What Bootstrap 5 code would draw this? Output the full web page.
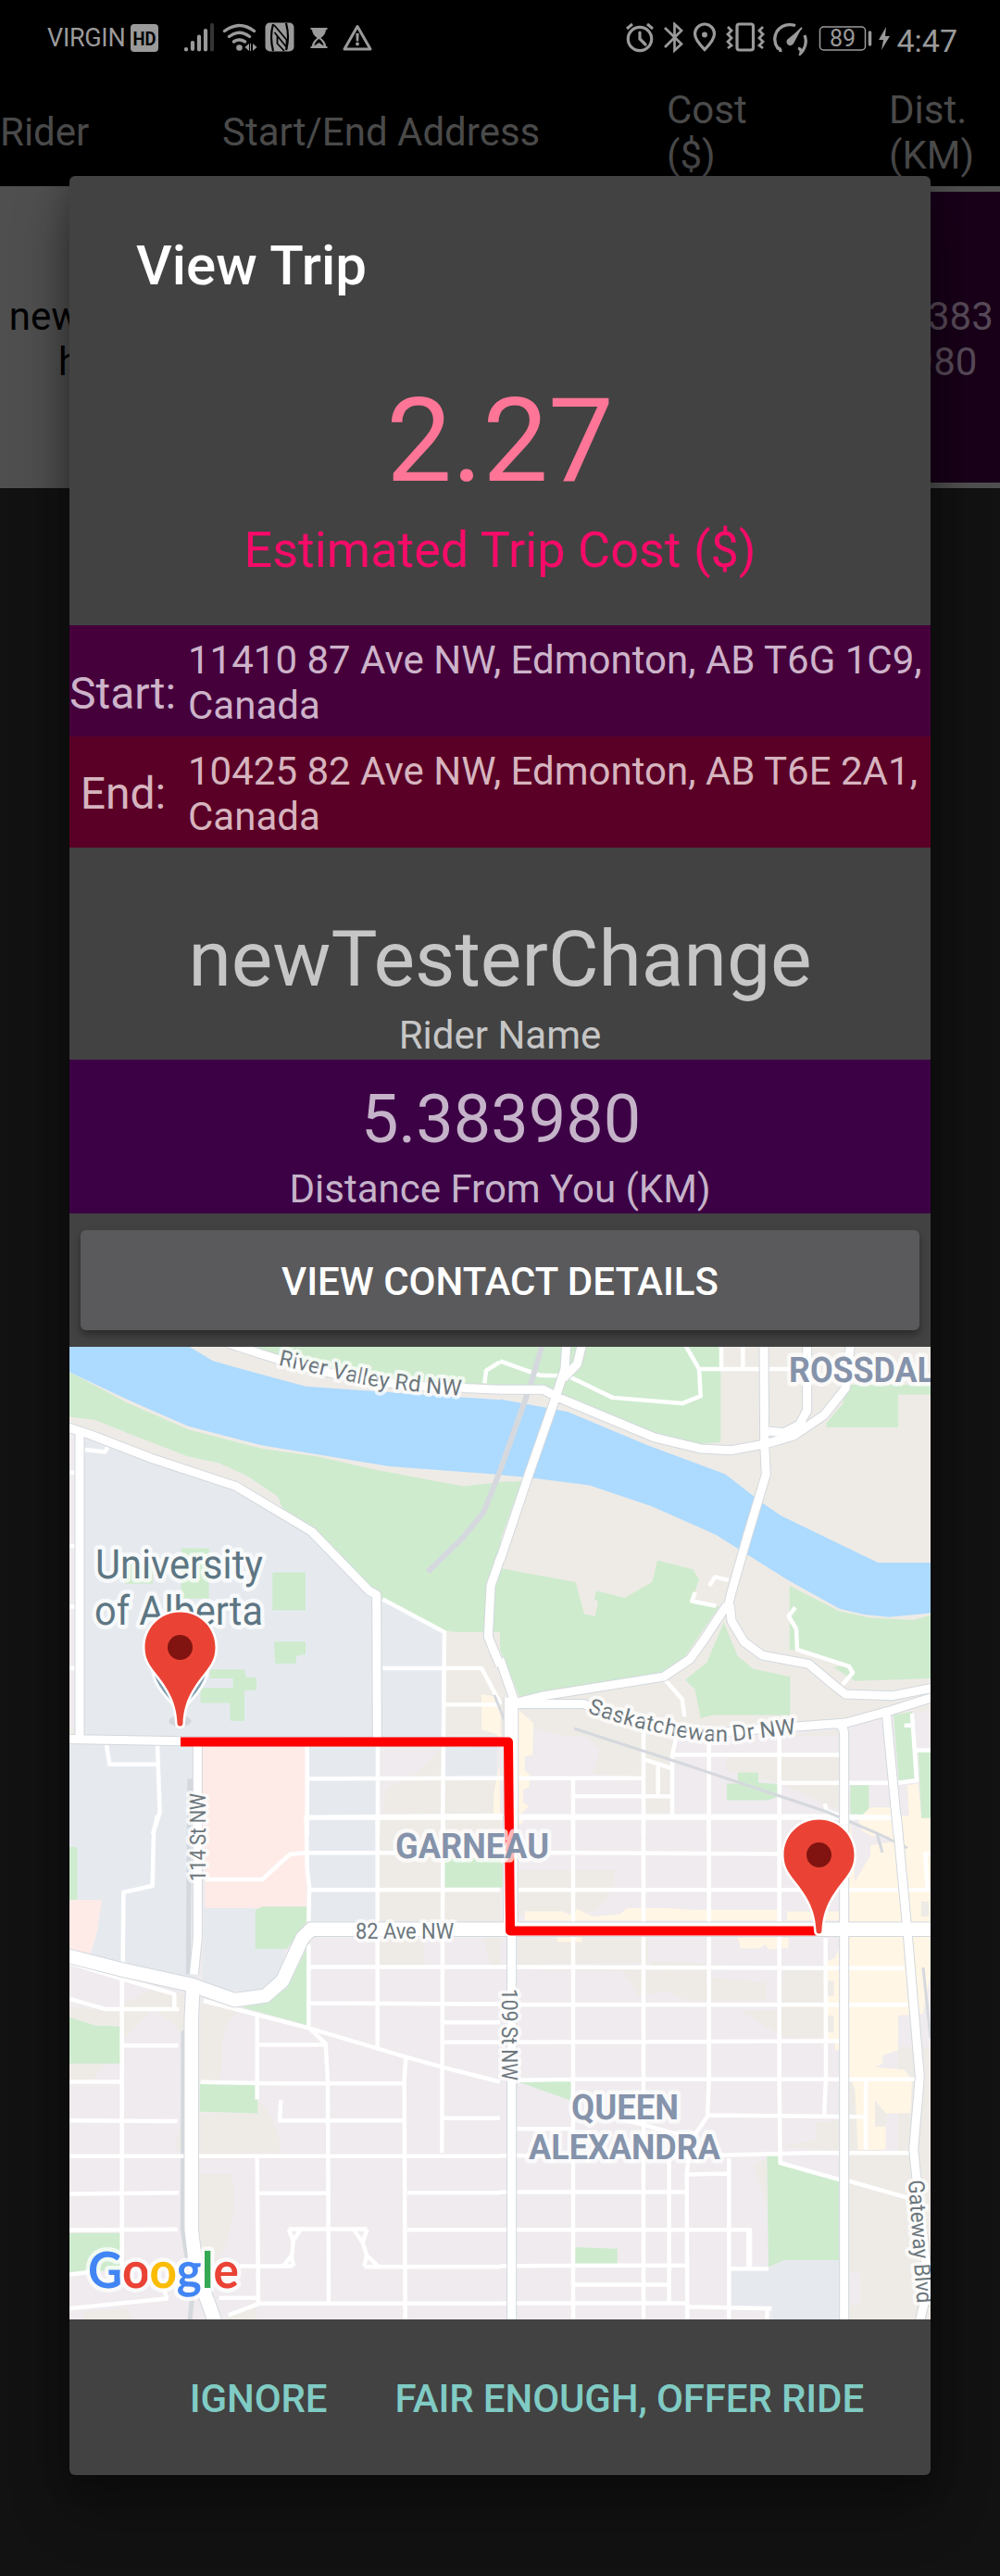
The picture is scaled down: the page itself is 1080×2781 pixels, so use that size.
<!DOCTYPE html>
<html lang="en">
<head>
<meta charset="utf-8">
<meta name="viewport" content="width=device-width, initial-scale=1">
<title>View Trip</title>
<link href="https://cdn.jsdelivr.net/npm/bootstrap@5.3.0/dist/css/bootstrap.min.css" rel="stylesheet">
<style>
  html, body { background: #121212; }
  body { font-family: Roboto, "Liberation Sans", sans-serif; font-size: 42px; line-height: 49px; }
  .screen { width: 1080px; height: 2781px; }
  .status-bar { height: 84px; color: #9a9a9a; padding: 24px 46px 0 51px; }
  .carrier { font-size: 27px; line-height: 32px; padding-top: 1px; width: 90px; letter-spacing: -.3px; }
  .clock { font-size: 34px; line-height: 40px; margin-left: 2px; }
  .head-row { height: 117px; color: #4a4a4a; }
  .trip-row { height: 326px; background: #4f4f4f; }
  .c-rider { width: 241px; }
  .c-head-rider { width: 240px; }
  .c-addr { width: 480px; }
  .c-cost { width: 240px; }
  .c-dist { width: 120px; }
  .trip-dist { background: #180019; color: #574a58; margin: 6px 0; }
  .trip-row .c-rider, .trip-dist { padding-top: 4px; }
  .dialog { top: 190px; left: 75px; width: 930px; height: 2482px; background: #424242; color: #c6c6c6; border-radius: 6px; box-shadow: 0 34px 60px rgba(0,0,0,.36), 0 0 34px rgba(0,0,0,.25); }
  .dialog-title { font-size: 60px; line-height: 70px; font-weight: 500; color: #fff; margin: 62px 0 80px 72px; }
  .cost { font-size: 126px; line-height: 148px; color: #ff7597; }
  .cost-label { font-size: 54px; line-height: 63px; color: #f50b68; margin: 12px 0 50px; }
  .addr-row { height: 120px; }
  .addr-start { background: #45003b; color: #cdb3ca; }
  .addr-end { background: #5a0026; color: #d6b4bf; }
  .addr-label { width: 115px; font-size: 48px; line-height: 56px; }
  .addr-start .addr-label { padding-top: 46px; }
  .addr-end .addr-label { padding: 34px 0 0 1px; }
  .addr-text { padding: 13px 0 0 13px; }
  .rider-name { font-size: 84px; line-height: 98px; margin-top: 72px; }
  .rider-label { margin: 8px 0 2px; }
  .distance { height: 166px; background: #3c0045; color: #c5b3c9; padding-top: 23px; }
  .distance-value { font-size: 72px; line-height: 84px; margin-bottom: 8px; padding-left: 2px; }
  .contact-btn { height: 108px; margin: 18px 12px; background: #5a5a5c; color: #fff; font-size: 42px; font-weight: 500; border: 0; border-radius: 6px; box-shadow: 0 5px 9px rgba(0,0,0,.35); }
  .contact-btn span { display: block; padding-top: 2px; }
  .actions { padding: 61px 72px 0 0; gap: 73px; }
  .action { color: #80cbc4; font-size: 42px; line-height: 49px; font-weight: 500; letter-spacing: -.13px; }
  .map path, .map polygon, .map polyline { vector-effect: non-scaling-stroke; }
  .gr { fill: #ceebce; } .bg { fill: #eeebe6; } .un { fill: #e6eaef; } .pk { fill: #feebe8; } .yl { fill: #fff6e5; } .li { fill: #efebee; } .wa { fill: #addaff; }
  .rd { fill: none; stroke-linejoin: round; stroke-linecap: butt; }
  .rail { fill: none; stroke: #d5d9de; }
  .lbl { font-family: Roboto, sans-serif; paint-order: stroke; stroke: rgba(255,255,255,.72); stroke-width: 9px; stroke-linejoin: round; text-rendering: geometricPrecision; }
  .street { font-size: 24px; fill: #6d777d; stroke-width: 8px; }
  .district { font-size: 38px; font-weight: 700; fill: #8593ab; }
  .logo { font-family: Lato, sans-serif; font-weight: 700; font-size: 54px; }
</style>
</head>
<body>
<div class="screen position-relative overflow-hidden">

  <div class="status-bar bg-black d-flex align-items-start">
    <div class="carrier text-nowrap">VIRGIN</div>
    <svg width="264" height="36" viewBox="141 24 264 36" fill="#9a9a9a">
      <rect x="141" y="26" width="30" height="30" rx="4"/>
      <text x="156" y="48.5" text-anchor="middle" font-family="Roboto, sans-serif" font-weight="700" font-size="20" textLength="25" lengthAdjust="spacingAndGlyphs" fill="#000">HD</text>
      <g stroke="#9a9a9a" stroke-width="4.2" stroke-linecap="round"><path d="M201 53v.5M208 46v7M215 39.500v14M222 33v20.500"/><path d="M229 27v26.500" stroke="#343434"/></g>
      <g fill="none" stroke="#9a9a9a" stroke-width="3.4" stroke-linecap="round"><path d="M242.500 33.500Q258.500 21.500 274.500 33.500M247.500 39.500Q258.500 31 269.500 39.500M252.500 45Q258.500 41 264.500 45"/></g>
      <circle cx="258.500" cy="51.500" r="3.300"/><path d="M264.500 51l4.500-4v8zM277.500 51l-4.500-4v8z"/><path d="M270 47v8h1v-8z"/>
      <rect x="286.500" y="24.500" width="31" height="31" rx="5"/>
      <path d="M295 26Q291 40 295 55M309 25Q313 40 309 54" fill="none" stroke="#000" stroke-width="2.200"/><path d="M296 27L309.500 43V51L296.500 35M299.500 38V47L307 55" fill="none" stroke="#000" stroke-width="1.800"/>
      <path d="M335.500 30h18v2h-1.500q0 5-5.500 9q5.500 4 5.500 9h1.500v2h-18v-2h1.500q0-5 5.500-9q-5.500-4-5.500-9h-1.500z"/><path d="M344.500 42q-4.500 3-5 7.500l5-3.500l5 3.500q-.5-4.500-5-7.500z" fill="#000"/>
      <path d="M386 28.500L400 53H372Z" fill="none" stroke="#9a9a9a" stroke-width="3" stroke-linejoin="round"/><path d="M384.300 36h3.400l-.5 8.500h-2.400z"/><circle cx="386" cy="47.500" r="1.900"/>
    </svg>
    <svg class="ms-auto" width="292" height="36" viewBox="674 24 292 36" fill="none" stroke="#9a9a9a" stroke-width="3.200">
      <circle cx="691" cy="42" r="12.700"/><path d="M691 35v7l6 6" stroke-linecap="round"/><path d="M677 31l6-5M705 31l-6-5" stroke-width="3"/>
      <path d="M718 30l18 17.500-7.500 7V26l7.500 7L718 51" stroke-width="2.700"/>
      <path d="M761 53.500Q750.500 43 750.500 36.500a10.500 10.500 0 0 1 21 0Q771.500 43 761 53.500Z"/><circle cx="761" cy="37.500" r="3" fill="#9a9a9a" stroke="none"/>
      <rect x="796" y="26" width="17.500" height="28" rx="2.500"/><path d="M786 29l4 4-4 4 4 4-4 4 4 4-4 3M824 29l-4 4 4 4-4 4 4 4-4 4 4 3" stroke-width="2.800"/>
      <path d="M843 56q0-4-3-4q-6-9-1-18q7-10 20-6.500M869 38q3 8-1 15q-1 2-3 4q1-4-3-5" stroke-width="3.300"/><path d="M866 30l-11 11" stroke-width="2"/><path d="M866 30L857 47a4 4 0 1 1-6-5z" fill="#9a9a9a" stroke="none"/>
      <rect x="885.500" y="29" width="49" height="25" rx="4" stroke-width="1.500"/><path d="M939.500 35v13" stroke-width="3.500" stroke-linecap="round"/>
      <text x="910" y="50" text-anchor="middle" font-family="Roboto, sans-serif" font-size="25" fill="#9a9a9a" stroke="none">89</text>
      <path d="M957 29L949 43h5l-2 11L961 39h-5z" fill="#9a9a9a" stroke="none"/>
    </svg>
    <div class="clock">4:47</div>
  </div>

  <div class="head-row bg-black d-flex align-items-center">
    <div class="c-head-rider">Rider</div>
    <div class="c-addr">Start/End Address</div>
    <div class="c-cost">Cost<br>($)</div>
    <div class="c-dist">Dist.<br>(KM)</div>
  </div>

  <div class="trip-row d-flex justify-content-between">
    <div class="c-rider d-flex align-items-center justify-content-center text-center text-black"><div>newTesterC<br>hange</div></div>
    <div class="c-dist trip-dist d-flex align-items-center justify-content-center text-center"><div>5.383<br>980</div></div>
  </div>

  <div class="dialog position-absolute d-flex flex-column">
    <div class="dialog-title">View Trip</div>
    <div class="cost text-center">2.27</div>
    <div class="cost-label text-center">Estimated Trip Cost ($)</div>

    <div class="addr-row addr-start d-flex">
      <div class="addr-label text-center flex-shrink-0">Start:</div>
      <div class="addr-text text-nowrap">11410 87 Ave NW, Edmonton, AB T6G 1C9,<br>Canada</div>
    </div>
    <div class="addr-row addr-end d-flex">
      <div class="addr-label text-center flex-shrink-0">End:</div>
      <div class="addr-text text-nowrap">10425 82 Ave NW, Edmonton, AB T6E 2A1,<br>Canada</div>
    </div>

    <div class="rider-name text-center">newTesterChange</div>
    <div class="rider-label text-center">Rider Name</div>
    <div class="distance text-center">
      <div class="distance-value">5.383980</div>
      <div>Distance From You (KM)</div>
    </div>

    <button type="button" class="btn contact-btn p-0"><span>VIEW CONTACT DETAILS</span></button>

    <svg class="map d-block flex-shrink-0" width="930" height="1050" viewBox="75 1454 930 1050">
      <defs>
        <!-- Each quadrant of the map has its own local units; stroke widths stay in screen pixels -->
        <g id="minor" class="rd">
          <path transform="translate(70 1440) scale(.33333 .34435)" d="M1030 832L1230 935L1224 1575M1030 1048H1350L1412 1160M1225 1162H1410M785 1290V1575M1014 1285V1575M790 1395L1410 1393M790 1515L1410 1510M135 1290L145 1350H300M300 1290L308 1500L285 1568M15 435H35M15 665H35M15 855H35M15 1048H35M65 363L130 370L138 355M1360 155L1365 115L1410 88"/>
          <path transform="translate(540 1440) scale(.33333 .34435)" d="M0 85L130 130L220 132L365 200L590 218L650 195L645 110L600 35M645 110H940M717 35V110M787 35V110M740 772L697 762L678 790M632 810L622 838L700 853M957 858L935 885L960 925L963 990L1130 1042L1143 1062L1110 1100M535 1085L590 1145L598 1200M465 1240V1575M570 1270L558 1320V1510M677 1270V1575M905 1260V1575M558 1320H1110M470 1335L555 1362M512 1355V1450M0 1393H465M237 1400V1575M240 1450H555M0 1512H1110L1270 1515M910 1408H1290L1350 1400L1335 1190M1310 1228H1335M1350 1305H1400M1052 1472L1058 1495L1100 1510"/>
          <path transform="translate(70 1960) scale(.33333 .35714)" d="M300 0L288 50L284 213L190 232L188 460M185 490V1370M0 550L130 585H370M355 585V540L190 495L15 445M190 695H368M0 805H180M0 922L365 924M0 1030H1410M0 1144L370 1140M0 1253L365 1251M0 1390L80 1380M0 1492L330 1460L318 1420M455 193H640L730 117L780 113H1075M782 0L785 160L792 215L790 320M790 390V640L845 690L852 800L855 1475M1013 0V700M1225 0L1222 1020M790 7H1410M790 225H1410M790 458H1410M790 567L1410 570M1230 625H1410M1230 685H1410M623 600V858M623 693H845M440 806L700 810H1100M1105 730L1100 800L1103 1530M700 860L696 922H1100M1225 915H1410M623 1035L627 1475M627 1142H850M725 1250H980M725 1250L740 1285L735 1340L742 1362M765 1250L740 1285M735 1330L710 1360M980 1250L965 1290L978 1330L970 1362M935 1250L965 1290M978 1330L1015 1362M500 1362H740M970 1364H1410M1110 1140H1410M1110 1252H1410M500 1458H625M530 1510L630 1475H1410M450 560L800 645L1105 730L1220 760L1410 805"/>
          <path transform="translate(540 1960) scale(.33333 .35714)" d="M237 0V1530M465 0V1530M677 0V800L672 910L620 980L605 1080L607 1530M905 0V790L908 1050L1098 1100L1130 1105L1320 1155M1055 370L1056 797L1050 905M548 1040V1470M742 1035V1530M805 1252V1365M1185 800V1010M0 7H1270M60 112L915 116M60 225H1400M0 458L1310 462M60 572H1320M60 685L1100 682M60 800L240 797H1370M672 906L1180 911M55 947H240M400 920L465 935L600 970M0 1028L740 1026L1000 1020H1330M610 1085L740 1082M0 1138H600M0 1252H810V1365M0 1362L240 1360H610M240 1418H545M0 1474H605L610 1485L880 1490M865 1490V1530M745 1370H870M1400 115H1378L1385 225"/>
        </g>
        <g id="major" class="rd">
          <path transform="translate(70 1440) scale(.33333 .34435)" d="M530 30L690 80Q980 165 1250 168L1410 175M0 290L80 315L280 390L555 478L800 620L985 805L1010 818L1012 1275M48 300V1270M0 1270L375 1277L1410 1280M430 1280V1575M1412 700L1380 790L1372 950L1410 1040"/>
          <path transform="translate(540 1440) scale(.33333 .34435)" d="M0 175H140L190 200L500 325L650 360L750 365L860 345L950 320L1050 255L1120 170L1135 35M855 35L857 345L862 440L800 640L750 810L735 870M995 35V240L970 285L920 310L870 305M265 35L250 95L205 140M215 35L210 110L180 200L90 450L0 710M0 1020L50 1160M735 850L660 960L615 1020L530 1075L140 1135L40 1160M745 850L750 900L790 965L850 1008L1000 1035L1080 1100L1120 1130L1270 1135L1400 1110M40 1160H270L330 1180Q600 1260 700 1250L1120 1220L1270 1180L1400 1140M1090 1222Q1115 1225 1115 1260V1575M1252 1190L1290 1575"/>
          <path transform="translate(70 1960) scale(.33333 .35714)" d="M430 0V370L418 480"/>
          <path transform="translate(540 1960) scale(.33333 .35714)" d="M1115 0V1530M1285 0L1320 350L1360 790L1340 1010L1350 1100L1388 1420L1360 1530M38 345V1530"/>
        </g>
        <g id="trunk" class="rd">
          <path transform="translate(540 1440) scale(.33333 .34435)" d="M36 1140V1575"/>
          <path transform="translate(70 1960) scale(.33333 .35714)" d="M0 422L180 465L410 512L550 558L650 545L705 500L770 370L798 344H1410M416 500L410 620V1250L425 1370L490 1540"/>
          <path transform="translate(540 1960) scale(.33333 .35714)" d="M0 344H1400M34 0V345"/>
        </g>
      </defs>

      <rect x="75" y="1454" width="930" height="1050" fill="#efebee"/>
      <rect x="75" y="1454" width="930" height="420" fill="#eeebe6"/>
      <rect x="75" y="1545" width="12" height="320" class="li"/>

      <g transform="translate(70 1440) scale(.33333 .34435)">
        <polygon class="wa" points="0,35 395,35 480,85 780,165 930,175 1412,207 1412,442 1390,440 1050,415 820,378 640,350 400,290 200,205 15,120"/>
        <polygon class="gr" points="600,35 1412,35 1412,180 1250,165 980,130 690,70"/>
        <polygon class="gr" points="15,120 200,215 400,300 640,360 820,385 1000,425 1290,478 1412,465 1412,935 1270,935 1230,930 1030,830 800,610 705,545 690,510 590,445 500,405 400,385 200,310 100,270 15,260"/>
        <polygon class="un" points="60,325 280,400 550,480 790,620 990,820 1230,935 1224,1285 60,1270"/>
        <polygon class="un" points="15,1270 428,1280 428,1575 15,1575"/>
        <polygon class="un" points="790,1280 1014,1280 1014,1575 790,1575"/>
        <polygon class="un" points="1230,1280 1400,1280 1400,1390 1230,1390"/>
        <polygon class="bg" points="1225,1290 1225,1395 1410,1395 1410,1575 1020,1575 1040,1430 1150,1370"/>
        <polygon class="pk" points="445,1295 780,1295 780,1575 445,1575"/>
        <path class="gr" d="M673 748H780V867H673ZM678 965H780V1005L750 1010V1034H682ZM470 1052H582L587 1077H621V1117H582V1213H536L534 1157H440V1110H545V1080H470ZM377 672H467V830H377ZM195 720H285V783H195Z"/>
        <polygon class="yl" points="1350,1130 1412,1140 1412,1275 1400,1255 1350,1240"/>
        <polygon class="yl" points="1408,1350 1412,1575 1388,1575 1390,1440"/>
        <path d="M397 1395H415V1575H397Z" fill="#d5d9de"/>
      </g>
      <g transform="translate(540 1440) scale(.33333 .34435)">
        <polygon class="wa" points="0,205 170,235 220,245 480,350 730,440 850,530 910,570 1225,717 1400,717 1400,875 1260,888 1180,880 1100,862 930,770 700,630 490,540 290,475 110,452 0,442"/>
        <path class="gr" d="M0 35H715V340L650 345L500 310L200 190L135 165H0ZM0 465L70 462L0 650ZM0 735L245 778L273 878L308 886L318 840L305 830L312 806L403 828L493 778L510 710L625 738L645 770L620 840L710 855L600 1010L520 1065L140 1125L65 1140L0 990ZM725 905L770 1010L820 1050L940 1075V1195H690L650 1205L632 1115L600 1085L670 1030ZM938 790L1100 870L1200 890L1340 897L1400 880V1080L1150 1088L1080 1045L1130 1040L960 990L938 990ZM1125 160H1400V190H1290V293H1057V280L1110 220Z"/>
        <polygon class="li" points="110,1235 325,1290 325,1400 100,1400"/>
        <polygon class="li" points="700,1265 1110,1225 1400,1180 1400,1500 1110,1500 1110,1240 910,1260 910,1330 700,1350"/>
        <polygon class="bg" points="240,1235 560,1260 560,1500 465,1500 465,1390 300,1380 325,1300"/>
        <polygon class="bg" points="735,1325 1105,1325 1105,1495 910,1410 735,1370"/>
        <path class="gr" d="M1275 1195L1335 1185L1350 1400H1292ZM1355 1310H1400V1515H1365ZM1135 1415H1195V1508H1135ZM770 1375H837V1407L905 1412L900 1450L870 1462H735V1410H770Z"/>
        <path class="yl" d="M60 1180L108 1220L106 1320L80 1325V1370L95 1380V1420L75 1430V1470L95 1480L60 1510ZM1320 1415L1355 1410L1365 1515H1400V1575H1180L1160 1520L1200 1485H1270L1270 1515H1325Z"/>
      </g>
      <g transform="translate(70 1960) scale(.33333 .35714)">
        <path class="un" d="M15 0H428V500L15 410ZM450 275H617V403H715L700 485L630 528L540 530L445 505ZM790 0H1010V320H790Z"/>
        <path class="pk" d="M455 0H778L785 280H455ZM15 255H120L105 350L82 425L15 408Z"/>
        <path class="bg" d="M1020 0H1412V320H1020ZM1020 370H1165V450H1020ZM1355 370H1412V450H1380ZM440 570L570 590Q510 620 510 700L505 800H440ZM440 900H625V860Q690 910 700 1020L440 1025ZM440 1085H540Q565 1200 510 1320L435 1420ZM190 570L290 520L385 540V660L290 580L190 680ZM15 580L180 590V635H100L15 610ZM15 750H130L90 800H15ZM385 900V1015L358 1010ZM60 1500L200 1490L220 1530H60ZM550 1500L620 1480V1530H510Z"/>
        <path class="gr" d="M15 95H40V255H15ZM617 285L640 275H785V320L745 370L720 403H617ZM1230 130H1412V217H1230ZM785 400L790 635L575 580L670 555L720 520ZM15 610L100 635L180 638V750H15ZM437 812H625V900L437 895ZM15 1262H180V1375L15 1380Z"/>
        <path class="rail" stroke-width="5" d="M403 0L400 480M384 650L382 1250L400 1360L415 1430L405 1530"/>
      </g>
      <g transform="translate(540 1960) scale(.33333 .35714)">
        <path class="bg" d="M60 165H370Q380 225 310 290L60 300ZM60 370H480V445L60 450ZM90 470H400L450 545L540 530L610 560H860V505L680 490V470L700 450L490 440V460H400ZM920 470H1060V670H920L780 590H905ZM910 1000L1030 980L1020 930L1140 915V1015ZM1130 800H1230V1020H1130ZM820 1060L865 1035V1165ZM1130 1030L1400 1020V1530H1130ZM1290 700H1400V1100H1290Z"/>
        <path class="yl" d="M80 290H200L230 300L250 283L300 305L390 298L410 280H540L620 285H900V318H80ZM930 290H1100V318H930ZM770 368H900L935 370V400L870 405L860 390L840 402H780ZM185 368H265V382H185ZM1130 0L1150 120L1200 90L1270 80L1230 0H1400V460L1370 600L1290 605V710H1290L1240 725V750L1215 760L1310 768L1335 800L1330 900H1250L1250 1010H1160L1150 830L1130 780ZM1085 430L1100 400V710H1085V680H1060V440ZM60 0H75V20L60 30Z"/>
        <path class="li" d="M1140 30L1200 60V120L1150 200ZM1292 605H1340V700H1292ZM1130 1380H1170V1480H1130Z"/>
        <path class="gr" d="M60 805L230 800V862ZM243 1305L380 1310V1357L243 1355ZM865 1030H905L910 1050L1098 1103V1345H920L870 1365ZM0 145H8V217H0ZM1365 0H1395V8H1365Z"/>
        <path class="un" d="M750 1375L870 1370L920 1345H1098V1530H880V1490H750Z"/>
        <path class="bg" d="M1060 500H1082V545H1060ZM1060 605H1082V655H1060ZM1215 860L1250 900V940H1215ZM1365 260H1390V305H1365Z"/>
      </g>

      <use href="#minor" stroke="#fff" stroke-width="4.500"/>
      <g class="rail" stroke-width="3">
        <path stroke-width="6" d="M585 1454L573 1495L540 1588L522 1633L500 1660L462 1697"/>
        <path d="M620 1866L740 1905L893 1956L947 1979L980 1995M947 1979L953 2000M997 2124L1005 2200M534 1830L546 1860"/>
      </g>
      <use href="#major" stroke="#d3d8dd" stroke-width="11"/>
      <use href="#trunk" stroke="#d3d8dd" stroke-width="16.500"/>
      <use href="#major" stroke="#fff" stroke-width="9"/>
      <use href="#trunk" stroke="#fff" stroke-width="14.500"/>

      <g class="lbl" font-size="44" fill="#5d7683">
        <text x="103" y="1704" textLength="181" lengthAdjust="spacingAndGlyphs">University</text>
        <text x="102" y="1754" textLength="182" lengthAdjust="spacingAndGlyphs">of Alberta</text>
      </g>

      <path d="M195 1880.500L549 1880.500L551 2084.500H884" fill="none" stroke="#f00" stroke-width="10" stroke-linejoin="round"/>

      <path id="p-river" d="M300 1473.500Q346 1484 380 1492T500 1507" fill="none"/>
      <text class="lbl street" font-size="24"><textPath href="#p-river">River Valley Rd NW</textPath></text>
      <path id="p-sask" d="M634 1849Q675 1863 713 1871Q760 1882 790 1880L865 1871" fill="none"/>
      <text class="lbl street"><textPath href="#p-sask">Saskatchewan Dr NW</textPath></text>
      <text class="lbl street" x="384" y="2093" textLength="106" lengthAdjust="spacingAndGlyphs">82 Ave NW</text>
      <text class="lbl street" transform="translate(222 2031) rotate(-90)" textLength="95" lengthAdjust="spacingAndGlyphs" y="0">114 St NW</text>
      <text class="lbl street" transform="translate(542 2147) rotate(90)" textLength="99" lengthAdjust="spacingAndGlyphs">109 St NW</text>
      <text class="lbl street" transform="translate(981 2354) rotate(86)" textLength="133" lengthAdjust="spacingAndGlyphs">Gateway Blvd</text>
      <text class="lbl district" x="852" y="1492" textLength="178" lengthAdjust="spacingAndGlyphs">ROSSDALE</text>
      <text class="lbl district" x="427" y="2006" textLength="166" lengthAdjust="spacingAndGlyphs">GARNEAU</text>
      <text class="lbl district" x="617" y="2288" textLength="116" lengthAdjust="spacingAndGlyphs">QUEEN</text>
      <text class="lbl district" x="571" y="2331" textLength="207" lengthAdjust="spacingAndGlyphs">ALEXANDRA</text>

      <ellipse cx="194.500" cy="1858" rx="12" ry="6" fill="#d3d6da"/>
      <path d="M165 1801Q163 1818 194.500 1848Q226 1818 224 1801Z" fill="#7f9fb0" stroke="#fff" stroke-width="3"/>
      <g id="pin"><path d="M194.500 1740.500C173 1740.500 156.500 1757.500 156.500 1778.500C156.500 1790 161 1797 168 1806C179 1820 190.500 1835 191.500 1860Q191.500 1863.500 194.500 1863.500Q197.500 1863.500 197.500 1860C198.500 1835 210 1820 221 1806C228 1797 232.500 1790 232.500 1778.500C232.500 1757.500 216 1740.500 194.500 1740.500Z" fill="#ea4335" stroke="#fff" stroke-width="5" paint-order="stroke"/><circle cx="194.500" cy="1778.500" r="13.500" fill="#811411"/></g>
      <use href="#pin" x="690" y="224"/>

      <text class="lbl logo" x="95" y="2470" textLength="163" lengthAdjust="spacingAndGlyphs"><tspan fill="#4285f4">G</tspan><tspan fill="#ea4335">o</tspan><tspan fill="#fbbc04">o</tspan><tspan fill="#4285f4">g</tspan><tspan fill="#34a853">l</tspan><tspan fill="#ea4335">e</tspan></text>
    </svg>

    <div class="actions d-flex justify-content-end">
      <div class="action">IGNORE</div>
      <div class="action">FAIR ENOUGH, OFFER RIDE</div>
    </div>
  </div>
</div>
<script src="https://cdn.jsdelivr.net/npm/bootstrap@5.3.0/dist/js/bootstrap.bundle.min.js"></script>
</body>
</html>
